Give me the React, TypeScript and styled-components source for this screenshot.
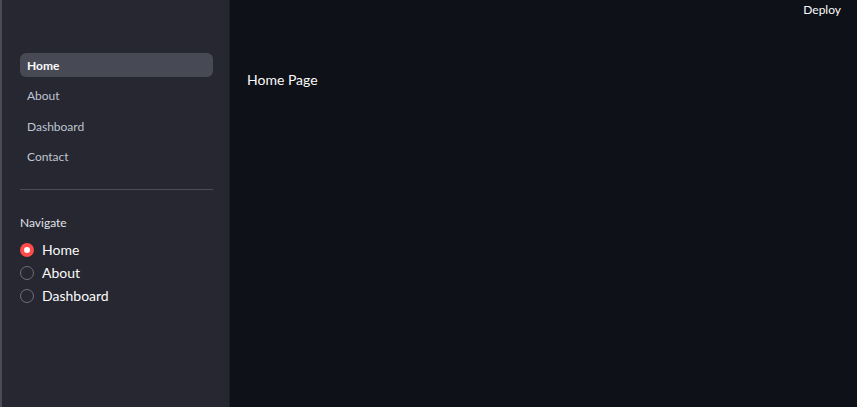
import styled, { createGlobalStyle } from "styled-components";

const GlobalStyle = createGlobalStyle`
    html, body {
        margin: 0;
        padding: 0;
        background: #0e1117;
    }
    body {
        font-family: Lato, "Noto Sans", sans-serif;
    }
`;

//styled-components
const Shell = styled.div`
    display: flex;
    width: 857px;
    height: 407px;
    overflow: hidden;
    background: #0e1117;
`;

const Sidebar = styled.aside`
    width: 230px;
    flex-shrink: 0;
    background: #262730;
    border-left: 2px solid #4a4b55;
    border-right: 1px solid #1c1d25;
    padding: 53px 16px 0 18px;
    box-sizing: border-box;
    display: flex;
    flex-direction: column;
`;

const NavList = styled.nav`
    display: flex;
    flex-direction: column;
    gap: 6.5px;
`;

const NavItem = styled.div<{ $active?: boolean }>`
    height: 24px;
    display: flex;
    align-items: center;
    padding: 0 7px;
    border-radius: 6px;
    font-size: 12px;
    color: ${(p) => (p.$active ? "#fafafa" : "#bfc5d3")};
    font-weight: ${(p) => (p.$active ? 700 : 400)};
    background: ${(p) => (p.$active ? "#474955" : "transparent")};
`;

const Divider = styled.hr`
    border: none;
    border-top: 1px solid #4b4c56;
    margin: 20px 0 0 0;
`;

const Label = styled.div`
    margin-top: 25px;
    font-size: 12px;
    color: #e2e3e8;
`;

const RadioGroup = styled.div`
    margin-top: 11px;
    display: flex;
    flex-direction: column;
    gap: 5px;
`;

const RadioRow = styled.label`
    display: flex;
    align-items: center;
    gap: 8px;
    height: 18px;
    font-size: 14px;
    color: #fafafa;
`;

const Dot = styled.span<{ $checked?: boolean }>`
    width: 14px;
    height: 14px;
    border-radius: 50%;
    box-sizing: border-box;
    background: ${(p) => (p.$checked ? "#ff4b4b" : "transparent")};
    border: ${(p) => (p.$checked ? "none" : "1.5px solid #6e6f78")};
    display: flex;
    align-items: center;
    justify-content: center;

    &::after {
        content: "";
        display: ${(p) => (p.$checked ? "block" : "none")};
        width: 6px;
        height: 6px;
        border-radius: 50%;
        background: #ffffff;
    }
`;

const Main = styled.main`
    flex: 1;
    display: flex;
    flex-direction: column;
    padding: 0 16px 0 17px;
`;

const Header = styled.header`
    display: flex;
    justify-content: flex-end;
    height: 20px;
    padding-top: 1px;
`;

const DeployButton = styled.span`
    font-size: 12px;
    color: #fafafa;
    line-height: 18px;
`;

const Title = styled.div`
    margin-top: 50px;
    font-size: 14px;
    color: #fafafa;
`;

const pages = ["Home", "About", "Dashboard", "Contact"];
const radios = ["Home", "About", "Dashboard"];

//Components
const App = () => {
    return (
        <>
            <GlobalStyle />
            <Shell>
                <Sidebar>
                    <NavList>
                        {pages.map((p, index) => (
                            <NavItem key={p} $active={index === 0}>
                                {p}
                            </NavItem>
                        ))}
                    </NavList>
                    <Divider />
                    <Label>Navigate</Label>
                    <RadioGroup>
                        {radios.map((r, index) => (
                            <RadioRow key={r}>
                                <Dot $checked={index === 0} />
                                {r}
                            </RadioRow>
                        ))}
                    </RadioGroup>
                </Sidebar>
                <Main>
                    <Header>
                        <DeployButton>Deploy</DeployButton>
                    </Header>
                    <Title>Home Page</Title>
                </Main>
            </Shell>
        </>
    );
};

export default App;
